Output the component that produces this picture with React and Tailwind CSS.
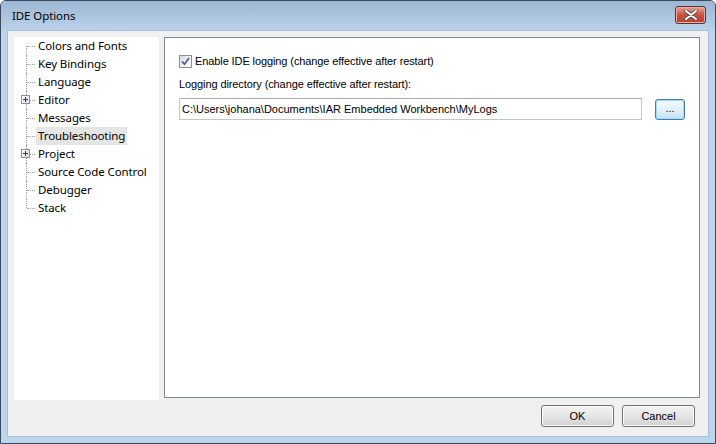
import React from 'react';

const treeItems = [
  { label: 'Colors and Fonts' },
  { label: 'Key Bindings' },
  { label: 'Language' },
  { label: 'Editor', expandable: true },
  { label: 'Messages' },
  { label: 'Troubleshooting', selected: true },
  { label: 'Project', expandable: true },
  { label: 'Source Code Control' },
  { label: 'Debugger' },
  { label: 'Stack' },
];

const PlusBox = () => (
  <span className="absolute left-[-5px] top-[4px] w-[9px] h-[9px] border border-[#919191] bg-gradient-to-br from-white to-[#dcdcdc] flex items-center justify-center">
    <svg width="7" height="7" viewBox="0 0 7 7">
      <path d="M1 3.5H6M3.5 1V6" stroke="#1f3a78" strokeWidth="1" shapeRendering="crispEdges" />
    </svg>
  </span>
);

const TreeRow = ({ item, first, last }) => (
  <div className="flex items-center h-[18px] pl-[12px]">
    <div className="relative w-[10px] h-full shrink-0">
      <span
        className={`absolute left-0 w-0 border-l border-dotted border-[#a0a0a0] ${
          first ? 'top-[9px] bottom-0' : last ? 'top-0 h-[9px]' : 'top-0 bottom-0'
        }`}
      />
      <span className="absolute left-[1px] top-[9px] w-[8px] h-0 border-t border-dotted border-[#a0a0a0]" />
      {item.expandable && <PlusBox />}
    </div>
    <span
      className={`px-[2px] h-[18px] leading-[18px] text-[11.5px] tracking-[-0.1px] text-black ${item.selected ? 'bg-[#e5e5e5]' : ''}`}
    >
      {item.label}
    </span>
  </div>
);

const DialogButton = ({ children }) => (
  <button className="w-[73px] h-[22px] rounded-[3px] border border-[#707070] bg-gradient-to-b from-[#f2f2f2] via-[#e6e6e6] to-[#d0d0d0] text-[11px] text-black font-['Liberation_Sans',sans-serif] shadow-[inset_0_0_0_1px_#fcfcfc]">
    {children}
  </button>
);

const App = () => {
  return (
    <div className="w-[716px] h-[444px] flex flex-col rounded-t-[6px] border border-[#3a4a5c] bg-[#bcd4ec] font-['Noto_Sans',sans-serif] overflow-hidden">
      <div className="h-[29px] shrink-0 flex items-center justify-between pl-[11px] pr-[9px] bg-gradient-to-b from-[#9db6d2] to-[#bad1e9]">
        <span className="text-[11.5px] tracking-[-0.1px] text-black">IDE Options</span>
        <button className="w-[31px] h-[18px] -mt-[1px] rounded-[3px] border border-[#5d2f34] bg-gradient-to-b from-[#e6a196] via-[#c7513f] to-[#b8402e] flex items-center justify-center shadow-[inset_0_0_0_1px_#e8b0a8]">
          <svg width="14" height="10" viewBox="0 0 14 10">
            <path d="M2 1L12 9M12 1L2 9" stroke="#4b4b4b" strokeWidth="3.6" strokeLinecap="round" />
            <path d="M2 1L12 9M12 1L2 9" stroke="#ffffff" strokeWidth="2" strokeLinecap="round" />
          </svg>
        </button>
      </div>

      <div className="flex-1 mx-[6px] mb-[6px] bg-[#f0f0f0] border border-[#a8bfd8] flex flex-col pt-[6px] pl-[6px] pr-[8px]">
        <div className="flex h-[363px] gap-[5px]">
          <div className="w-[145px] h-full bg-white">
            {treeItems.map((item, i) => (
              <TreeRow key={item.label} item={item} first={i === 0} last={i === treeItems.length - 1} />
            ))}
          </div>

          <div className="flex-1 h-[361px] bg-white border border-[#828790] pl-[14px] pr-[14px] pt-[16px] font-['Liberation_Sans',sans-serif] text-[11px] text-black">
            <label className="flex items-center h-[14px]">
              <span className="w-[13px] h-[13px] border border-[#8e8f8f] bg-gradient-to-br from-[#dcdcdc] to-white flex items-center justify-center">
                <svg width="9" height="9" viewBox="0 0 9 9">
                  <path d="M1 4.5L3.5 7.2L8 1" fill="none" stroke="#4a5d88" strokeWidth="1.7" />
                </svg>
              </span>
              <span className="ml-[3px] tracking-[-0.1px]">Enable IDE logging (change effective after restart)</span>
            </label>
            <div className="mt-[9px] h-[14px] leading-[14px] tracking-[-0.1px]">Logging directory (change effective after restart):</div>
            <div className="mt-[7px] flex items-center">
              <div className="flex-1 h-[22px] border border-[#c5c5c5] border-t-[#abadb3] flex items-center px-[2px]">
                C:\Users\johana\Documents\IAR Embedded Workbench\MyLogs
              </div>
              <button className="ml-[13px] w-[30px] h-[21px] rounded-[3px] border border-[#3c7fb1] bg-gradient-to-b from-[#f2f9fd] via-[#e3f1fb] to-[#c9e2f3] shadow-[inset_0_0_0_1px_#a7d9f5] text-[11px] leading-[10px] pb-[2px]">
                ...
              </button>
            </div>
          </div>
        </div>

        <div className="flex justify-end gap-[8px] mt-[5px] pr-[5px]">
          <DialogButton>OK</DialogButton>
          <DialogButton>Cancel</DialogButton>
        </div>
      </div>
    </div>
  );
};

export default App;
